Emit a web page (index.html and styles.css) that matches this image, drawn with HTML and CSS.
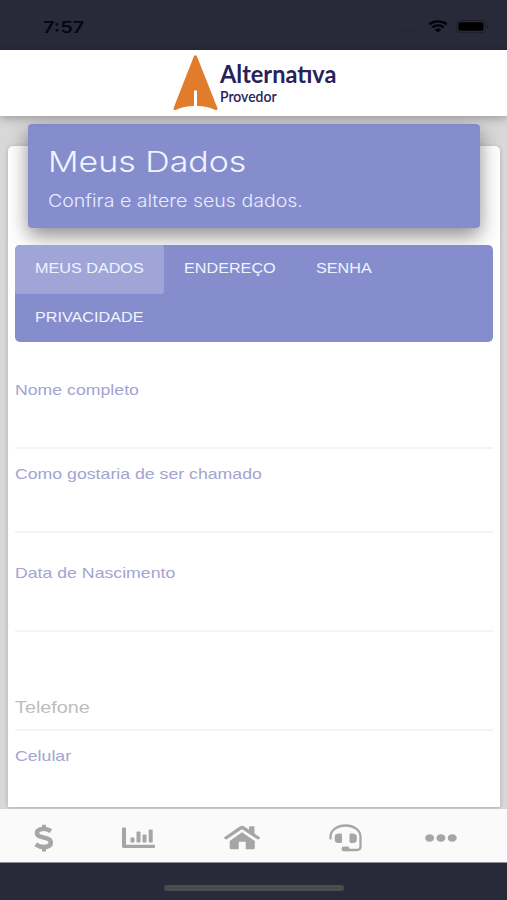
FILE: index.html
```html
<!DOCTYPE html>
<html lang="pt-BR">
<head>
  <meta charset="UTF-8">
  <title>Alternativa Provedor - Meus Dados</title>
  <link rel="stylesheet" href="styles.css">
</head>
<body>
  <div class="status">
    <span class="clock">7:57</span>
    <div class="status-icons">
      <span class="signal">....</span>
      <svg class="wifi" width="20" height="13" viewBox="0 0 20 13">
        <path d="M1.2 4.4C6 .4 14 .4 18.8 4.4M4.3 7.3c3.2-2.6 8.2-2.6 11.4 0" fill="none" stroke="#020208" stroke-width="2.3"/>
        <path d="M6.8 9.6c1.8-1.4 4.6-1.4 6.4 0L10 12.4z" fill="#020208"/>
      </svg>
      <svg class="battery" width="33" height="13" viewBox="0 0 33 13">
        <rect x=".5" y=".5" width="29" height="12" rx="3.5" fill="none" stroke="#20202c"/>
        <rect x="2.5" y="2.3" width="25" height="8.4" rx="2" fill="#000"/>
        <path d="M31 4.5q1.5 2 0 4z" fill="#11111c"/>
      </svg>
    </div>
  </div>

  <header>
    <svg class="logo" width="45" height="56" viewBox="0 0 45 56">
      <path d="M20.8 1.4Q22.4-1 24 1.4L44.4 53q.6 2.6-2 1.9Q34 51 24 51V35.5h-3V51Q11 51 2.6 54.9 0 55.6.6 53z" fill="#e17c2c"/>
    </svg>
    <div class="brand">
      <span class="brand-name">Alternatıva</span>
      <span class="brand-sub">Provedor</span>
    </div>
  </header>

  <main>
    <div class="card">
      <div class="card-header">
        <h1>Meus Dados</h1>
        <p>Confira e altere seus dados.</p>
      </div>

      <ul class="tabs">
        <li class="tab tab-dados active"><span>MEUS DADOS</span></li>
        <li class="tab tab-endereco"><span>ENDEREÇO</span></li>
        <li class="tab tab-senha"><span>SENHA</span></li>
        <li class="tab"><span>PRIVACIDADE</span></li>
      </ul>

      <form>
        <div class="field first">
          <label for="nome">Nome completo</label>
          <input type="text" id="nome">
        </div>
        <div class="field">
          <label for="apelido">Como gostaria de ser chamado</label>
          <input type="text" id="apelido">
        </div>
        <div class="field spaced">
          <label for="nascimento">Data de Nascimento</label>
          <input type="text" id="nascimento">
        </div>
        <div class="field empty">
          <label for="telefone">Telefone</label>
        </div>
        <div class="field">
          <label for="celular">Celular</label>
          <input type="text" id="celular">
        </div>
      </form>
    </div>
  </main>

  <nav>
    <svg class="icon-dollar" width="20" height="28" viewBox="0 0 20 28">
      <path d="M10 .8v5M10 22.5v5" stroke="#a6a6a6" stroke-width="4" fill="none"/>
      <path d="M17 7.2C13.5 5 9.5 4.3 6.3 5.3c-4.5 1.4-4.5 6 0 7.3l6.5 1.8c5.3 1.5 5.2 6.7.6 8.1-3.6 1.1-8 .3-11.8-2.2" fill="none" stroke="#a6a6a6" stroke-width="4.5"/>
    </svg>
    <svg class="icon-chart" width="33" height="22" viewBox="0 0 33 22">
      <path d="M0 1.3Q0 .5 1 .5h2q1 0 1 .8v16.4h28q1 0 1 .8v1.8q0 .8-1 .8H2q-2 0-2-1.600z"/>
      <rect x="8.5" y="10.5" width="4" height="5" rx=".8"/>
      <rect x="14.5" y="4.5" width="4" height="11" rx=".8"/>
      <rect x="20.5" y="7.5" width="4" height="8" rx=".8"/>
      <rect x="26.7" y="2.5" width="4" height="13" rx=".8"/>
    </svg>
    <svg class="icon-home" width="36" height="25" viewBox="0 0 36 25">
      <path d="M18 7.2 30.8 16v7q0 1.300-1.500 1.300h-7.600v-7.600h-7v7.600H7.200q-1.500 0-1.500-1.300v-7z"/>
      <path d="M.3 12.300 15.700 1.600q2.300-1.500 4.600 0l4.700 3.200V2q0-.8.900-.8h3.700q.9 0 .9.800v6.500l5.300 3.800q.5.500 0 1l-1.200 1q-.6.500-1.200 0L18.500 4.600q-.5-.3-1 0L2.800 14.300q-.6.500-1.200 0l-1.300-1q-.5-.5 0-1z"/>
    </svg>
    <svg class="icon-support" width="34" height="28" viewBox="0 0 34 28">
      <path d="M1.5 14.500V13C1.5 6 8.300 1.500 16.500 1.500S31.500 6 31.500 13v9.500q0 3.500-4 3.500H17" fill="none" stroke="#a6a6a6" stroke-width="2.300" stroke-linecap="round"/>
      <path d="M9.300 9.500h2.200q1.500 0 1.500 1.400v6.800q0 1.400-1.500 1.400H9.300q-3.600-.6-3.600-3.200v-3.200q0-2.600 3.600-3.200zM22 9.500h2.200q3.600.6 3.600 3.200v3.200q0 2.600-3.600 3.200H22q-1.500 0-1.500-1.400v-6.800q0-1.400 1.500-1.400z"/>
      <rect x="12.500" y="22.500" width="8" height="4.800" rx="2.400"/>
    </svg>
    <svg class="icon-more" width="32" height="8" viewBox="0 0 32 8">
      <ellipse cx="4.600" cy="4" rx="4.500" ry="3.800"/>
      <ellipse cx="15.900" cy="4" rx="4.500" ry="3.800"/>
      <ellipse cx="27.200" cy="4" rx="4.500" ry="3.800"/>
    </svg>
  </nav>

  <div class="home-area">
    <div class="home-bar"></div>
  </div>
</body>
</html>
```

FILE: styles.css
```css
* { box-sizing: border-box; }
body { margin: 0; height: 900px; display: flex; flex-direction: column; overflow: hidden; background: #d8d8d8; font-family: "Liberation Sans", Arial, sans-serif; }

/* status bar */
.status { height: 50px; flex: none; background: #282a39; display: flex; justify-content: space-between; padding: 0 20px 0 43px; }
.clock { margin-top: 17px; height: 20px; line-height: 20px; font-family: Inter, sans-serif; font-size: 16px; font-weight: 600; color: #05060f; transform: scaleX(1.25); transform-origin: left; }
.status-icons { display: flex; align-items: flex-start; padding-top: 20px; }
.signal { color: #1e202c; font-size: 14px; line-height: 13px; letter-spacing: 1px; margin-right: 9px; }
.battery { margin-left: 8px; margin-right: -2px; }

header { height: 66px; flex: none; background: #fff; display: flex; padding: 5px 0 0 173px; position: relative; z-index: 2; box-shadow: 0 2px 9px rgba(0, 0, 0, 0.3); }
.brand { display: flex; flex-direction: column; align-items: flex-start; margin: 6px 0 0 2px; color: #28215a; }
.brand-name { font-family: Lato, sans-serif; font-size: 24px; line-height: 26px; font-weight: 700; transform-origin: left; transform: scaleX(0.98); white-space: nowrap; }
.brand-sub { font-family: Lato, sans-serif; font-size: 15.5px; line-height: 18px; font-weight: 600; transform-origin: left; transform: scaleX(0.9); }

main { flex: 1; min-height: 0; padding: 30px 7px 2px 8px; overflow: hidden; }
.card { height: 100%; background: #fff; border-radius: 5px 5px 0 0; box-shadow: 0 1px 5px rgba(0, 0, 0, 0.2); padding: 0 7px; }
.card-header { position: relative; top: -22px; height: 104px; margin: 0 13px; padding: 19px 20px; border-radius: 4px; background: #868dcd; color: #f1f5ff; box-shadow: 0 8px 20px rgba(0, 0, 0, 0.45); }
h1 { margin: 0; width: max-content; font-family: Inter, sans-serif; font-size: 29px; line-height: 37px; font-weight: 300; transform: scaleX(1.17); transform-origin: left; }
.card-header p { margin: 8px 0 0; width: max-content; font-family: Inter, sans-serif; font-weight: 300; font-size: 17.5px; line-height: 25px; color: #e8ecff; transform: scaleX(1.117); transform-origin: left; }

.tabs { position: relative; list-style: none; margin: -5px 0 0; padding: 0; height: 97px; display: flex; flex-wrap: wrap; align-content: flex-start; background: #868dcd; border-radius: 5px; overflow: hidden; }
.tab { height: 48.5px; padding: 0 20px; font-size: 14px; line-height: 47px; color: #eff3ff; }
.tab span { display: inline-block; transform: scaleX(1.155); transform-origin: left; }
.tab.active { background: #a0a5d8; border-radius: 3px; }
.tab-dados { width: 149px; }
.tab-endereco { width: 132px; }
.tab-senha { width: 150px; }

/* form */
.field { height: 83.5px; padding-top: 15px; border-bottom: 2px solid #f4f4f5; }
.field.first { height: 107px; padding-top: 38px; }
.field.spaced { height: 99.5px; padding-top: 30px; }
.field.empty { height: 99px; padding-top: 65px; }
.field label { display: block; width: max-content; font-size: 14.5px; line-height: 20px; color: #a3a4d0; transform: scaleX(1.22); transform-origin: left; }
.field.empty label { font-size: 16.5px; color: #bdbdbd; transform: scaleX(1.2); }
.field input { display: block; width: 100%; height: 28px; margin-top: 6px; border: 0; padding: 0; background: none; }

nav { height: 54px; flex: none; position: relative; background: #fafafa; display: flex; align-items: center; border-bottom: 1px solid #8f9099; padding: 4px 0 0 34px; fill: #a6a6a6; }
.icon-chart { margin-left: 68px; }
.icon-home { margin-left: 69px; }
.icon-support { margin-left: 69px; }
.icon-more { margin-left: 62px; }

.home-area { height: 37px; flex: none; background: #282a39; }
.home-bar { width: 180px; height: 6px; margin: 22px 0 0 164px; border-radius: 3px; background: #4b4c4d; }
```
